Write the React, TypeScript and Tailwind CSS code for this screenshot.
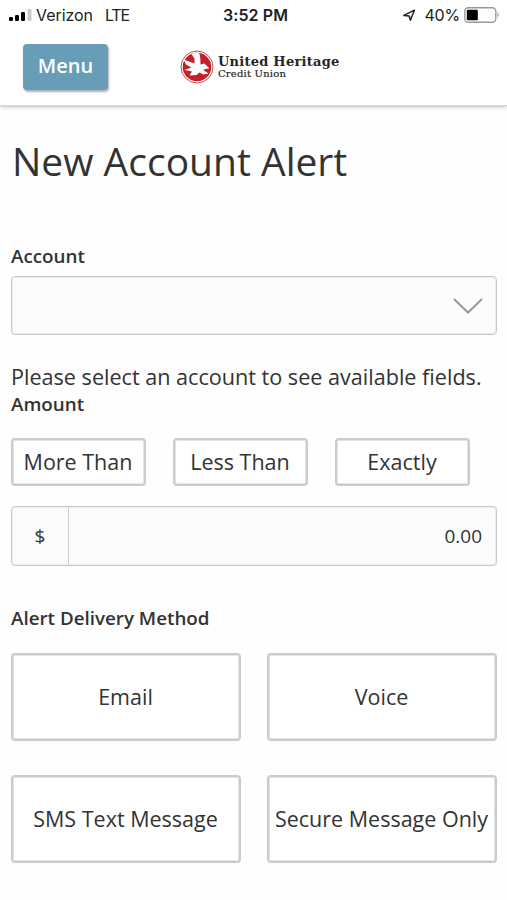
import clsx from 'clsx';

const StatusBar = (): JSX.Element => {
  return (
    <div className="flex h-[30px] items-center font-['Inter','Liberation_Sans',sans-serif] text-[#222]">
      <div className="flex w-[170px] items-center pl-[9px]">
        <svg width="23" height="14" viewBox="0 0 23 14" aria-hidden="true">
          <rect x="0" y="9" width="4" height="4" rx="1.2" fill="#000" />
          <rect x="6" y="7" width="4" height="6" rx="1.2" fill="#000" />
          <rect x="12" y="4" width="4" height="9" rx="1.2" fill="#000" />
          <rect x="18.5" y="1" width="4" height="12" rx="1.2" fill="#c9c9c9" />
        </svg>
        <span className="ml-[4px] text-[16px] tracking-[-0.05px]">Verizon</span>
        <span className="ml-[12px] text-[16px] tracking-[-1.2px]">LTE</span>
      </div>
      <div className="flex w-[171px] justify-center">
        <span className="text-[16px] font-semibold tracking-[0.1px]">3:52 PM</span>
      </div>
      <div className="flex flex-1 items-center justify-end pr-[7px]">
        <svg width="14" height="14" viewBox="0 0 14 14" fill="none" aria-hidden="true">
          <path d="M1.8 7.4 12.4 2.2 8.4 12.2 7.2 8Z" stroke="#222" strokeWidth="1.5" strokeLinejoin="round" />
        </svg>
        <span className="ml-[8px] text-[16px] tracking-[-0.2px]">40%</span>
        <svg className="ml-[4px]" width="36" height="16" viewBox="0 0 36 16" fill="none" aria-hidden="true">
          <rect x="0.8" y="0.8" width="31" height="14.4" rx="3.5" stroke="#999" strokeWidth="1.4" />
          <rect x="2.8" y="2.8" width="11" height="10.4" rx="1" fill="#000" />
          <path d="M33.5 5.3c1.6.8 1.6 4.6 0 5.4Z" fill="#999" />
        </svg>
      </div>
    </div>
  );
};

const Logo = (): JSX.Element => {
  return (
    <div className="flex items-center">
      <svg width="34" height="34" viewBox="0 0 34 34" aria-hidden="true">
        <circle cx="17" cy="17" r="16" fill="#fff" stroke="#cf4a50" strokeWidth="1" />
        <circle cx="17" cy="17" r="14.3" fill="#c4202a" />
        <path
          d="M11 3.5 19 2.8C20.5 6 20.5 11 20.5 14.5L24.5 13.5 29.5 18.5 25 19 23.5 20 25.5 21.5 28.5 23.5 23.5 24.5 19.5 22.5 16.5 25 9.5 25.5 12 21.5 4.5 20 11.5 17.5 6 14.5 3.5 9.5 14.5 13.5 14.5 8.5Z"
          fill="#fff"
        />
      </svg>
      <div className="ml-[4px] font-['DejaVu_Serif',serif] text-[#262626]">
        <div className="text-[13px] leading-[13px] font-bold tracking-[0.25px] whitespace-nowrap">United Heritage</div>
        <div className="text-[10px] leading-[11px] tracking-[0.2px] whitespace-nowrap [-webkit-text-stroke:0.2px]">
          Credit Union
        </div>
      </div>
    </div>
  );
};

const Label = ({ children }: { children: string }): JSX.Element => {
  return <div className="text-[18.8px] leading-[26px] font-semibold text-[#333]">{children}</div>;
};

const OptionButton = ({ label, className }: { label: string; className: string }): JSX.Element => {
  return (
    <button
      type="button"
      className={clsx(
        'flex items-center justify-center rounded-[4px] border-2 border-[#cbcbcb] bg-white pt-px pr-px text-[21.5px] whitespace-nowrap shadow-[inset_0_0_0_1px_#e4e4e4]',
        className,
      )}
    >
      {label}
    </button>
  );
};

const App = (): JSX.Element => {
  return (
    <div className="h-[900px] w-[507px] overflow-hidden bg-[#fefefe] font-['Open_Sans','Noto_Sans',sans-serif] text-[#333]">
      <header className="h-[106px] border-b border-[#d6d6d6] bg-white shadow-[0_1px_4px_rgba(0,0,0,0.25)]">
        <StatusBar />
        <div className="flex items-start">
          <button
            type="button"
            className="mt-[14px] ml-[23px] h-[46px] w-[85px] rounded-[4px] bg-[#689db7] pb-[3px] text-[20px] font-semibold text-white shadow-[1px_2px_2px_rgba(60,60,90,0.4)]"
          >
            Menu
          </button>
          <div className="mt-[20px] ml-[72px]">
            <Logo />
          </div>
        </div>
      </header>

      <main className="px-[11px]">
        <h1 className="pt-[28px] pl-px text-[39px] leading-[54px]">New Account Alert</h1>

        <div className="mt-[55px]">
          <Label>Account</Label>
          <div className="mt-[7px] flex h-[59px] w-[486px] items-center justify-end rounded-[4px] border border-[#c9c9c9] bg-[#fcfcfc] pr-[12px] shadow-[inset_0_0_0_1px_#ececec]">
            <svg width="32" height="18" viewBox="0 0 32 18" fill="none" aria-hidden="true">
              <path d="M2 2 16 15.5 30 2" stroke="#999" strokeWidth="2" />
            </svg>
          </div>
        </div>

        <p className="mt-[28px] text-[21.6px] leading-[28px] whitespace-nowrap">
          Please select an account to see available fields.
        </p>
        <Label>Amount</Label>

        <div className="mt-[21px] flex gap-[27px]">
          {amountOptions.map((label) => (
            <OptionButton key={label} label={label} className="h-[48px] w-[135px]" />
          ))}
        </div>

        <div className="mt-[20px] flex h-[60px] w-[486px] rounded-[4px] border border-[#c9c9c9] bg-[#fcfcfc] text-[19px] shadow-[inset_0_0_0_1px_#ececec]">
          <div className="flex w-[57px] items-center justify-center border-r border-[#ccc]">$</div>
          <div className="flex flex-1 items-center justify-end pr-[14px]">0.00</div>
        </div>

        <div className="mt-[39px]">
          <Label>Alert Delivery Method</Label>
          <div className="mt-[22px] grid w-[486px] grid-cols-2 gap-x-[26px] gap-y-[34px]">
            {deliveryMethods.map((label) => (
              <OptionButton key={label} label={label} className="h-[88px]" />
            ))}
          </div>
        </div>
      </main>
    </div>
  );
};

const amountOptions = ['More Than', 'Less Than', 'Exactly'];

const deliveryMethods = ['Email', 'Voice', 'SMS Text Message', 'Secure Message Only'];

export default App;
